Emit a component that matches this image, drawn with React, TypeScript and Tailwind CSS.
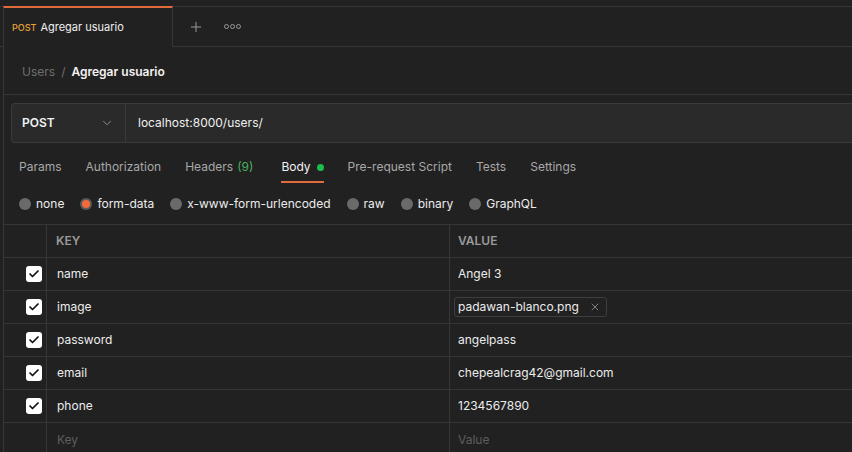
import { ChevronDown, Plus, X, Check } from "lucide-react";

const tabs = [
  { id: "params", label: "Params" },
  { id: "auth", label: "Authorization" },
  { id: "headers", label: "Headers", count: "(9)" },
  { id: "body", label: "Body", dot: true },
  { id: "pre", label: "Pre-request Script" },
  { id: "tests", label: "Tests" },
  { id: "settings", label: "Settings" },
];

const bodyTypes = ["none", "form-data", "x-www-form-urlencoded", "raw", "binary", "GraphQL"];

const rows = [
  { key: "name", value: "Angel 3" },
  { key: "image", value: "padawan-blanco.png", file: true },
  { key: "password", value: "angelpass" },
  { key: "email", value: "chepealcrag42@gmail.com" },
  { key: "phone", value: "1234567890" },
];

const Box = () => (
  <span className="flex h-4 w-4 items-center justify-center rounded-[3px] bg-white">
    <Check className="h-3 w-3 text-[#111]" strokeWidth={3.5} />
  </span>
);

const App = () => {
  return (
    <div
      className="h-[452px] w-[852px] overflow-hidden bg-[#212121] text-[12px] text-[#ececec]"
      style={{ fontFamily: "Inter, 'Noto Sans', sans-serif" }}
    >
      <div className="h-[6px]" />

      {/* request tabs */}
      <div className="flex h-[41px] border-t border-[#363636]">
        <div className="w-[3px] border-b border-[#363636]" />
        <div className="flex w-[170px] items-center gap-[4px] border-x border-[#363636] border-t-2 border-t-[#e06b3c] -mt-px pl-[8px]">
          <span className="text-[9px] font-medium text-[#e8a13a]">POST</span>
          <span className="text-[11px] text-[#f0f0f0]">Agregar usuario</span>
        </div>
        <div className="flex flex-1 items-center border-b border-[#363636] pl-[15px]">
          <Plus className="h-[16px] w-[16px] text-[#9a9a9a]" strokeWidth={1.5} />
          <span className="ml-[20px] flex gap-[1px]">
            <span className="h-[5px] w-[5px] rounded-full border border-[#9a9a9a]" />
            <span className="h-[5px] w-[5px] rounded-full border border-[#9a9a9a]" />
            <span className="h-[5px] w-[5px] rounded-full border border-[#9a9a9a]" />
          </span>
        </div>
      </div>

      <div className="ml-[3px] border-l border-[#363636]">
        {/* breadcrumb */}
        <div className="flex h-[48px] items-center border-b border-[#363636] pl-[18px] pt-[2px]">
          <span className="text-[#6e6e6e]">Users</span>
          <span className="mx-[6px] text-[#6e6e6e]">/</span>
          <span className="font-semibold text-[#f2f2f2]">Agregar usuario</span>
        </div>

        {/* url bar */}
        <div className="pl-[7px] pt-[8px]">
          <div className="flex h-[40px] rounded-l-[4px] border border-r-0 border-[#3a3a3a] bg-[#2a2a2a]">
            <div className="flex w-[114px] items-center justify-between border-r border-[#3a3a3a] pl-[10px] pr-[11px]">
              <span className="font-semibold text-[#f2f2f2]">POST</span>
              <ChevronDown className="h-[14px] w-[14px] text-[#9a9a9a]" strokeWidth={1.5} />
            </div>
            <div className="flex items-center pl-[12px] text-[#f0f0f0]">localhost:8000/users/</div>
          </div>
        </div>

        {/* params tabs */}
        <div className="flex h-[40px] items-stretch pl-[15px] text-[#a8a8a8]">
          {tabs.map((t) => (
            <div
              key={t.id}
              className={
                t.id === "body"
                  ? "mr-[24px] flex items-center gap-[6px] border-b-2 border-[#e06b3c] pt-[10px] text-[#f2f2f2]"
                  : t.id === "headers"
                  ? "mr-[28px] flex items-center gap-[4px] border-b-2 border-transparent pt-[10px]"
                  : "mr-[24px] flex items-center gap-[4px] border-b-2 border-transparent pt-[10px]"
              }
            >
              <span>{t.label}</span>
              {t.count && <span className="text-[#49b15f]">{t.count}</span>}
              {t.dot && <span className="h-[7px] w-[7px] rounded-full bg-[#1fbd4d]" />}
            </div>
          ))}
        </div>

        {/* body type radios */}
        <div className="flex h-[41px] items-center pl-[15px] text-[#ececec]">
          {bodyTypes.map((b) => (
            <div key={b} className="mr-[16px] flex items-center gap-[5px]">
              {b === "form-data" ? (
                <span className="flex h-[12px] w-[12px] items-center justify-center rounded-full bg-[#5a5a5a]">
                  <span className="h-[8px] w-[8px] rounded-full bg-[#f26b3a]" />
                </span>
              ) : (
                <span className="h-[12px] w-[12px] rounded-full bg-[#6a6a6a]" />
              )}
              <span>{b}</span>
            </div>
          ))}
        </div>

        {/* form-data table */}
        <div className="border-t border-[#363636]">
          <div className="grid h-[33px] grid-cols-[43px_403px_1fr] border-b border-[#363636] text-[12px] font-semibold text-[#9a9a9a]">
            <div className="border-r border-[#363636]" />
            <div className="flex items-center border-r border-[#363636] pl-[9px]">KEY</div>
            <div className="flex items-center pl-[8px]">VALUE</div>
          </div>
          {rows.map((r) => (
            <div
              key={r.key}
              className="grid h-[33px] grid-cols-[43px_403px_1fr] border-b border-[#363636]"
            >
              <div className="flex items-center justify-end border-r border-[#363636] pr-[4px]">
                <Box />
              </div>
              <div className="flex items-center border-r border-[#363636] pl-[10px]">{r.key}</div>
              <div className="flex items-center pl-[8px]">
                {r.file ? (
                  <span className="-ml-[4px] flex h-[20px] items-center gap-[10px] rounded-[3px] border border-[#3e3e3e] pl-[3px] pr-[5px]">
                    <span>{r.value}</span>
                    <X className="h-[12px] w-[12px] text-[#9a9a9a]" strokeWidth={1.6} />
                  </span>
                ) : (
                  r.value
                )}
              </div>
            </div>
          ))}
          <div className="grid h-[33px] grid-cols-[43px_403px_1fr] text-[#5e5e5e]">
            <div className="border-r border-[#363636]" />
            <div className="flex items-center border-r border-[#363636] pl-[10px]">Key</div>
            <div className="flex items-center pl-[8px]">Value</div>
          </div>
        </div>
      </div>
    </div>
  );
};

export default App;
